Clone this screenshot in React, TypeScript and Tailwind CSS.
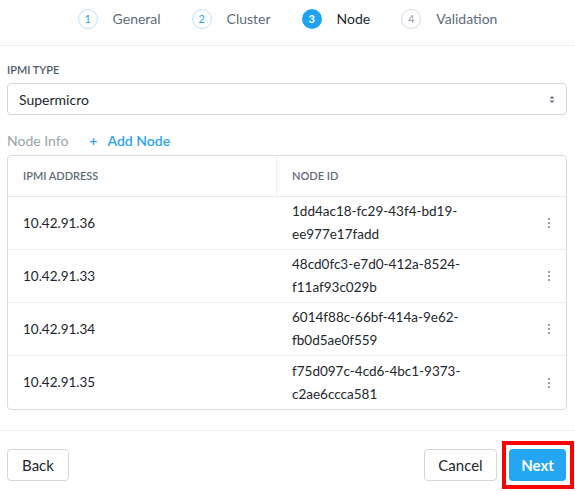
import React from "react";

type Step = { n: number; label: string; state: "done" | "active" | "todo" };

const steps: Step[] = [
  { n: 1, label: "General", state: "done" },
  { n: 2, label: "Cluster", state: "done" },
  { n: 3, label: "Node", state: "active" },
  { n: 4, label: "Validation", state: "todo" },
];

const nodes = [
  { ip: "10.42.91.36", id: ["1dd4ac18-fc29-43f4-bd19-", "ee977e17fadd"] },
  { ip: "10.42.91.33", id: ["48cd0fc3-e7d0-412a-8524-", "f11af93c029b"] },
  { ip: "10.42.91.34", id: ["6014f88c-66bf-414a-9e62-", "fb0d5ae0f559"] },
  { ip: "10.42.91.35", id: ["f75d097c-4cd6-4bc1-9373-", "c2ae6ccca581"] },
];

function StepCircle({ step }: { step: Step }) {
  if (step.state === "active") {
    return (
      <span className="flex h-5 w-5 items-center justify-center rounded-full bg-[#1fa2f2] text-[11px] font-bold text-white">
        {step.n}
      </span>
    );
  }
  const tone =
    step.state === "done"
      ? "border-[#bfe3fb] text-[#2aa5f2]"
      : "border-[#d8dbe0] text-[#9aa3ad]";
  return (
    <span
      className={`flex h-5 w-5 items-center justify-center rounded-full border text-[11px] ${tone}`}
    >
      {step.n}
    </span>
  );
}

function Kebab() {
  return (
    <div className="flex flex-col gap-[2px]">
      <span className="h-[2px] w-[2px] bg-[#9aa3ad]" />
      <span className="h-[2px] w-[2px] bg-[#9aa3ad]" />
      <span className="h-[2px] w-[2px] bg-[#9aa3ad]" />
    </div>
  );
}

export default function App() {
  return (
    <div
      className="h-[491px] w-[575px] overflow-hidden bg-white text-[#22272e]"
      style={{ fontFamily: "Lato, 'Open Sans', sans-serif" }}
    >
      {/* wizard steps */}
      <div className="flex items-center justify-center border-b border-[#eceef1] pt-[9px] pb-[16px]">
        {steps.map((s, i) => (
          <div key={s.n} className={`flex items-center ${i > 0 ? "ml-[31px]" : ""}`}>
            <StepCircle step={s} />
            <span
              className={`ml-[15px] text-[14px] leading-5 ${
                s.state === "active" ? "text-[#22272e]" : "text-[#5f6b78]"
              }`}
            >
              {s.label}
            </span>
          </div>
        ))}
      </div>

      <div className="pl-[7px] pr-[8px]">
        <div className="mt-[17px] text-[11px] leading-[14px] font-semibold text-[#4f5b68]">
          IPMI TYPE
        </div>
        <div className="mt-[6px] flex h-[32px] items-center justify-between rounded-[4px] border border-[#d3d7dc] pl-[11px] pr-[11px]">
          <span className="text-[14px]">Supermicro</span>
          <svg width="6" height="9" viewBox="0 0 6 9" className="text-[#5f6b78]">
            <path d="M0.5 3.5 L3 1 L5.5 3.5Z" fill="currentColor" />
            <path d="M0.5 5.5 L3 8 L5.5 5.5Z" fill="currentColor" />
          </svg>
        </div>

        <div className="mt-[15px] flex h-5 items-center text-[14px]">
          <span className="text-[#9aa3ad]">Node Info</span>
          <span className="ml-[21px] font-semibold text-[#2aa5f2]">+</span>
          <span className="ml-[10px] font-semibold text-[#2aa5f2]">Add Node</span>
        </div>

        <div className="mt-[5px] overflow-hidden rounded-[4px] border border-[#d8dce1]">
          <div className="flex h-[41px] border-b border-[#e6e9ed] text-[11px] font-semibold text-[#5f6b78]">
            <div className="flex w-[269px] items-center border-r border-[#eceef1] pl-[15px]">
              IPMI ADDRESS
            </div>
            <div className="flex flex-1 items-center pl-[15px]">NODE ID</div>
          </div>
          {nodes.map((n, i) => (
            <div
              key={n.ip}
              className={`flex h-[53px] items-center text-[13.5px] ${
                i < nodes.length - 1 ? "border-b border-[#eceef1]" : ""
              }`}
            >
              <div className="w-[269px] pl-[15px]">{n.ip}</div>
              <div className="flex-1 pl-[15px] leading-[23px]">
                <div>{n.id[0]}</div>
                <div>{n.id[1]}</div>
              </div>
              <div className="pr-[16px]">
                <Kebab />
              </div>
            </div>
          ))}
        </div>
      </div>

      {/* footer */}
      <div className="mt-[20px] flex items-center justify-between border-t border-[#eceef1] pt-[18px] pl-[7px] pr-[9px]">
        <button className="h-[32px] w-[62px] rounded-[4px] border border-[#d3d7dc] bg-white text-[15px] text-[#22272e]">
          Back
        </button>
        <div className="flex items-center gap-[12px]">
          <button className="h-[32px] w-[73px] rounded-[4px] border border-[#d3d7dc] bg-white text-[15px] text-[#22272e]">
            Cancel
          </button>
          <div className="relative">
            <button className="h-[32px] w-[57px] rounded-[4px] bg-[#24a6f3] text-[15px] font-bold text-white">
              Next
            </button>
            <div className="pointer-events-none absolute -top-[8px] -bottom-[8px] -left-[7px] -right-[8px] border-4 border-[#ff0000]" />
          </div>
        </div>
      </div>
    </div>
  );
}
